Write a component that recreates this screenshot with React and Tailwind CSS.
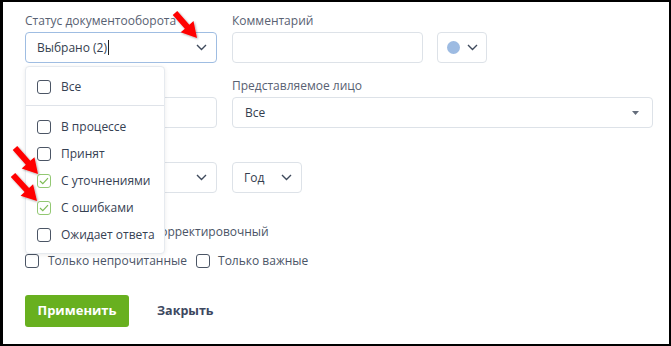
import React from "react";

const font = { fontFamily: '"Open Sans", "Noto Sans", sans-serif' };

function Chevron({ className = "" }) {
  return (
    <svg width="11" height="7" viewBox="0 0 11 7" className={className}>
      <path d="M1 1 L5.5 5.5 L10 1" fill="none" stroke="#3f4a5c" strokeWidth="1.4" />
    </svg>
  );
}

function Box({ checked }) {
  if (checked) {
    return (
      <span className="flex w-[14px] h-[14px] shrink-0 items-center justify-center rounded-[3px] border-[1.5px] border-[#93c873] bg-white">
        <svg width="10" height="8" viewBox="0 0 10 8">
          <path d="M1 4 L3.8 6.6 L9 1.2" fill="none" stroke="#7dbb55" strokeWidth="1.2" />
        </svg>
      </span>
    );
  }
  return <span className="block w-[14px] h-[14px] shrink-0 rounded-[3px] border-[1.5px] border-[#4b5565] bg-white" />;
}

function arrowPoints(tx, ty, hx, hy) {
  const dx = hx - tx;
  const dy = hy - ty;
  const len = Math.hypot(dx, dy);
  const ux = dx / len;
  const uy = dy / len;
  const px = -uy;
  const py = ux;
  const sw = 3;
  const hw = 8.5;
  const hl = 15;
  const bx = hx - ux * hl;
  const by = hy - uy * hl;
  const pts = [
    [tx + px * sw, ty + py * sw],
    [bx + px * sw, by + py * sw],
    [bx + px * hw, by + py * hw],
    [hx, hy],
    [bx - px * hw, by - py * hw],
    [bx - px * sw, by - py * sw],
    [tx - px * sw, ty - py * sw],
  ];
  return pts.map((p) => p.join(",")).join(" ");
}

function Label({ children }) {
  return <div className="h-4 text-[12px] leading-4 text-[#586172] mb-[3px] whitespace-nowrap">{children}</div>;
}

export default function App() {
  const items = [
    { t: "В процессе", c: false },
    { t: "Принят", c: false },
    { t: "С уточнениями", c: true },
    { t: "С ошибками", c: true },
    { t: "Ожидает ответа", c: false },
  ];
  return (
    <div className="relative w-[671px] h-[346px] bg-black pl-[3px] pt-[2px] pr-[2px] pb-[2px]" style={font}>
      <div className="w-full h-full bg-white pl-[22px] pt-[11px]">
        {/* Row 1 */}
        <div className="flex items-end">
          <div className="relative w-[192px]">
            <Label>Статус документооборота</Label>
            <div className="flex h-[31px] items-center justify-between rounded-[4px] border border-[#9fbde2] pl-[11px] pr-[9px] text-[12px] text-[#343e4e]">
              <span className="flex items-center">
                Выбрано (2)
                <span className="ml-[1px] inline-block w-px h-[15px] bg-[#222]" />
              </span>
              <Chevron />
            </div>
            {/* dropdown panel */}
            <div className="absolute left-0 top-[calc(100%+3px)] z-10 w-[140px] rounded-[4px] border border-[#e6eaef] bg-white pt-[6px] pb-[5px] shadow-[0_1px_4px_rgba(0,0,0,0.08)]">
              <div className="flex h-[28px] items-center gap-[10px] pl-[11px] text-[12px] text-[#364153]">
                <Box />
                <span>Все</span>
              </div>
              <div className="mt-[4px] border-t border-[#dfe3e9]" />
              <div className="pt-[7px]">
                {items.map((it) => (
                  <div key={it.t} className="flex h-[27px] items-center gap-[10px] pl-[11px] text-[12px] text-[#364153] whitespace-nowrap">
                    <Box checked={it.c} />
                    <span>{it.t}</span>
                  </div>
                ))}
              </div>
            </div>
          </div>
          <div className="ml-[15px] w-[191px]">
            <Label>Комментарий</Label>
            <div className="h-[31px] rounded-[4px] border border-[#dde2e8]" />
          </div>
          <div className="ml-[14px] flex h-[31px] w-[50px] items-center gap-[7px] rounded-[4px] border border-[#dde2e8] pl-[9px]">
            <span className="block w-[13px] h-[13px] rounded-full bg-[#9dbbe2]" />
            <Chevron />
          </div>
        </div>

        {/* Row 2 */}
        <div className="mt-[15px] flex items-end">
          <div className="w-[192px]">
            <div className="h-[31px] rounded-[4px] border border-[#dde2e8]" />
          </div>
          <div className="ml-[15px] w-[421px]">
            <Label>Представляемое лицо</Label>
            <div className="flex h-[31px] items-center justify-between rounded-[4px] border border-[#dde2e8] pl-[12px] pr-[13px] text-[12px] text-[#343e4e]">
              <span>Все</span>
              <svg width="7" height="4" viewBox="0 0 7 4">
                <path d="M0 0 L7 0 L3.5 4 Z" fill="#646d7b" />
              </svg>
            </div>
          </div>
        </div>

        {/* Row 3 */}
        <div className="mt-[34px] flex items-end">
          <div className="flex h-[31px] w-[192px] items-center justify-end rounded-[4px] border border-[#dde2e8] pr-[9px]">
            <Chevron />
          </div>
          <div className="ml-[15px] flex h-[31px] w-[70px] items-center justify-between rounded-[4px] border border-[#dde2e8] pl-[11px] pr-[9px] text-[12px] text-[#343e4e]">
            <span>Год</span>
            <Chevron />
          </div>
        </div>

        {/* Checkbox rows */}
        <div className="mt-[32px] flex h-[14px] items-center gap-[9px] text-[12px] text-[#4a5466]">
          <Box />
          <span className="whitespace-nowrap">Исправительный/корректировочный</span>
        </div>
        <div className="mt-[14px] flex h-[15px] items-center text-[12px] text-[#4a5466]">
          <Box />
          <span className="ml-[9px] whitespace-nowrap">Только непрочитанные</span>
          <span className="ml-[9px]"><Box /></span>
          <span className="ml-[8px] whitespace-nowrap">Только важные</span>
        </div>

        {/* Buttons */}
        <div className="mt-[27px] flex items-center">
          <button className="h-[32px] w-[104px] rounded-[3px] bg-[#68b01f] text-[13px] font-bold text-white">
            Применить
          </button>
          <button className="ml-[28px] text-[12.5px] font-bold text-[#3c4860]">Закрыть</button>
        </div>
      </div>

      {/* Red arrows overlay */}
      <svg className="pointer-events-none absolute left-0 top-0 z-20" width="671" height="346">
        <defs>
          <filter id="sh" x="-50%" y="-50%" width="200%" height="200%">
            <feDropShadow dx="1" dy="1" stdDeviation="1" floodColor="#000" floodOpacity="0.35" />
          </filter>
        </defs>
        <g filter="url(#sh)" fill="#ff0000">
          <polygon points={arrowPoints(175, 13, 197, 38)} />
          <polygon points={arrowPoints(15, 148, 38, 174)} />
          <polygon points={arrowPoints(13, 175, 37, 201)} />
        </g>
      </svg>
    </div>
  );
}
